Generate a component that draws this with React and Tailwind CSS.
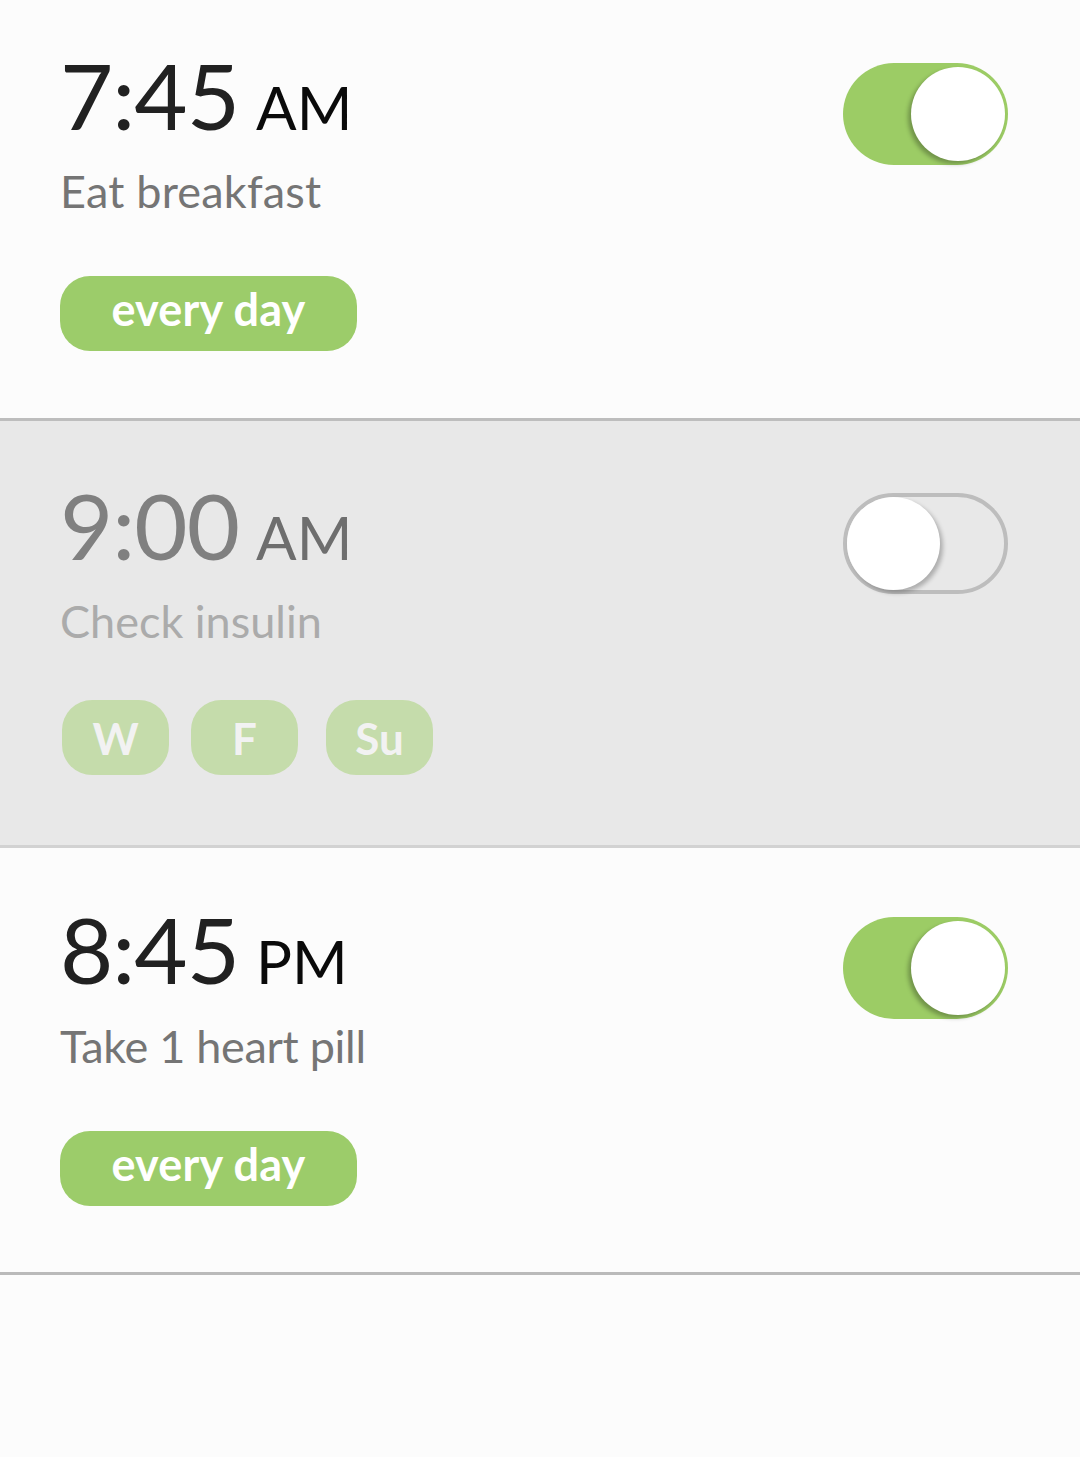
import React from "react";

const FONT = { fontFamily: "Lato, 'Noto Sans', sans-serif" };

function Toggle({ on }) {
  if (on) {
    return (
      <div className="relative w-[165px] h-[102px] rounded-full bg-[#9ccc65]">
        <div className="absolute right-[3px] top-[4px] w-[94px] h-[94px] rounded-full bg-white shadow-[-3px_3px_4px_rgba(0,0,0,0.28)]" />
      </div>
    );
  }
  return (
    <div className="relative w-[165px] h-[101px] rounded-full border-[4px] border-[#bdbdbd]">
      <div className="absolute left-0 top-0 w-[93px] h-[93px] rounded-full bg-white shadow-[3px_3px_4px_rgba(0,0,0,0.25)]" />
    </div>
  );
}

function Time({ t, ap, dim }) {
  return (
    <div className="flex items-baseline h-[92px]">
      <span
        className={`text-[92px] leading-[92px] tracking-[-1px] ${dim ? "text-[#808080]" : "text-[#212121]"}`}
      >
        {t}
      </span>
      <span
        className={`ml-[17px] text-[60px] leading-[60px] ${dim ? "text-[#6e6e6e]" : "text-[#0a0a0a]"}`}
      >
        {ap}
      </span>
    </div>
  );
}

function EveryDay({ mt }) {
  return (
    <div className={`${mt} flex`}>
      <div className="h-[75px] w-[297px] rounded-[30px] bg-[#9ccc6a] flex items-center justify-center pb-[8px]">
        <span className="text-[45px] leading-[45px] font-bold text-white tracking-[0.2px]">every day</span>
      </div>
    </div>
  );
}

function Chip({ label, cls }) {
  return (
    <div className={`h-[75px] w-[107px] rounded-[30px] bg-[#c5dcab] flex items-center justify-center ${cls}`}>
      <span className="text-[44px] leading-[44px] font-bold text-[#f2f2f2]">{label}</span>
    </div>
  );
}

export default function App() {
  return (
    <div style={FONT} className="w-[1080px] min-h-[1457px] bg-[#fcfcfc]">
      {/* Row 1 */}
      <div className="h-[421px] border-b-[3px] border-[#bdbdbd] pl-[60px] pr-[72px] pt-[49px] flex justify-between items-start">
        <div className="flex flex-col">
          <Time t="7:45" ap="AM" />
          <div className="mt-[28px] text-[45px] leading-[45px] tracking-[0.2px] text-[#757575]">Eat breakfast</div>
          <EveryDay mt="mt-[62px]" />
        </div>
        <div className="mt-[14px]">
          <Toggle on />
        </div>
      </div>

      {/* Row 2 */}
      <div className="h-[427px] bg-[#e8e8e8] border-b-[3px] border-[#d2d2d2] pl-[60px] pr-[72px] pt-[58px] flex justify-between items-start">
        <div className="flex flex-col">
          <Time t="9:00" ap="AM" dim />
          <div className="mt-[28px] text-[45px] leading-[45px] text-[#ababab]">Check insulin</div>
          <div className="mt-[56px] flex">
            <Chip label="W" cls="ml-[2px]" />
            <Chip label="F" cls="ml-[22px]" />
            <Chip label="Su" cls="ml-[28px]" />
          </div>
        </div>
        <div className="mt-[14px]">
          <Toggle on={false} />
        </div>
      </div>

      {/* Row 3 */}
      <div className="h-[427px] border-b-[3px] border-[#bababa] pl-[60px] pr-[72px] pt-[55px] flex justify-between items-start">
        <div className="flex flex-col">
          <Time t="8:45" ap="PM" />
          <div className="mt-[29px] text-[45px] leading-[45px] tracking-[-0.3px] text-[#757575]">Take 1 heart pill</div>
          <EveryDay mt="mt-[62px]" />
        </div>
        <div className="mt-[14px]">
          <Toggle on />
        </div>
      </div>
    </div>
  );
}
